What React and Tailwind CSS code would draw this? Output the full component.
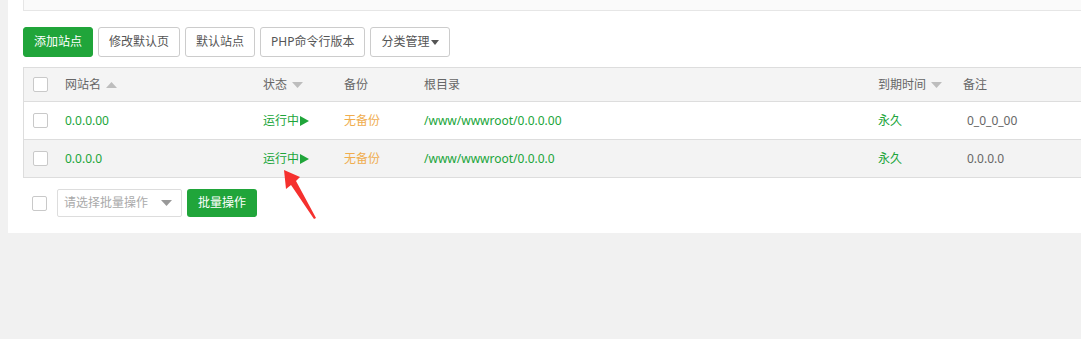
import React from 'react';

const FONT = "font-['Noto_Sans','Noto_Sans_CJK_SC',sans-serif]";

const sites = [
  { name: '0.0.0.00', path: '/www/wwwroot/0.0.0.00', note: '0_0_0_00' },
  { name: '0.0.0.0', path: '/www/wwwroot/0.0.0.0', note: '0.0.0.0', hover: true },
];

const Check = () => (
  <span className="block w-[15px] h-[15px] bg-white border border-[#c9c9c9] rounded-[2px]" />
);

const SortUp = () => (
  <svg width="11" height="6" viewBox="0 0 11 6" className="ml-[5px]">
    <path d="M0 6 L5.5 0 L11 6 Z" fill="#bdbdbd" />
  </svg>
);

const SortDown = () => (
  <svg width="11" height="6" viewBox="0 0 11 6" className="ml-[5px]">
    <path d="M0 0 L5.5 6 L11 0 Z" fill="#bdbdbd" />
  </svg>
);

const cols = 'grid grid-cols-[32px_198px_80px_80px_455px_85px_1fr]';

const Btn = ({ children, green }) => (
  <button
    className={
      green
        ? 'h-[30px] px-[10px] rounded-[3px] bg-[#20a53a] border border-[#20a53a] text-white text-[12px]'
        : 'h-[30px] px-[10px] rounded-[3px] bg-white border border-[#ccc] text-[#555] text-[12px] flex items-center'
    }
  >
    {children}
  </button>
);

export default function App() {
  return (
    <div className={`relative w-[1081px] h-[339px] overflow-hidden bg-[#f1f1f1] ${FONT}`}>
      <div className="ml-[8px] w-[1100px] bg-white px-[15px] pb-[16px]">
        {/* top box (cut off) */}
        <div className="h-[11px] bg-[#fafafa] border-l border-b border-[#e6e6e6]" />

        {/* toolbar */}
        <div className="mt-[16px] flex gap-[5px]">
          <Btn green>添加站点</Btn>
          <Btn>修改默认页</Btn>
          <Btn>默认站点</Btn>
          <Btn>PHP命令行版本</Btn>
          <Btn>
            分类管理
            <svg width="8" height="5" viewBox="0 0 8 5" className="ml-[2px] mt-[1px]">
              <path d="M0 0 L4 5 L8 0 Z" fill="#555" />
            </svg>
          </Btn>
        </div>

        {/* table */}
        <div className="mt-[10px] border-l border-t border-[#ddd] text-[12px]">
          <div className={`${cols} h-[34px] bg-[#f4f4f4] border-b border-[#ddd] text-[#666] items-center`}>
            <div className="pl-[9px]"><Check /></div>
            <div className="pl-[9px] flex items-center">网站名<SortUp /></div>
            <div className="pl-[9px] flex items-center">状态<SortDown /></div>
            <div className="pl-[10px]">备份</div>
            <div className="pl-[10px]">根目录</div>
            <div className="pl-[9px] flex items-center">到期时间<SortDown /></div>
            <div className="pl-[9px]">备注</div>
          </div>
          {sites.map((s) => (
            <div
              key={s.name}
              className={`${cols} h-[38px] border-b border-[#ddd] items-center ${s.hover ? 'bg-[#f3f3f3]' : 'bg-white'}`}
            >
              <div className="pl-[9px]"><Check /></div>
              <div className="pl-[9px] text-[#20a53a]">{s.name}</div>
              <div className="pl-[9px] text-[#20a53a] flex items-center">
                运行中
                <svg width="9" height="10" viewBox="0 0 9 10" className="ml-[1px]">
                  <path d="M0 0 L9 5 L0 10 Z" fill="#20a53a" />
                </svg>
              </div>
              <div className="pl-[10px] text-[#f0ad4e]">无备份</div>
              <div className="pl-[10px] text-[#20a53a]">{s.path}</div>
              <div className="pl-[9px] text-[#20a53a]">永久</div>
              <div className="pl-[13px] text-[#666]">{s.note}</div>
            </div>
          ))}
        </div>

        {/* batch row */}
        <div className="mt-[11px] flex items-center">
          <div className="ml-[9px]"><Check /></div>
          <div className="ml-[10px] w-[125px] h-[28px] border border-[#ddd] rounded-[2px] flex items-center justify-between pl-[6px] pr-[9px] text-[12px] text-[#aaa]">
            <span>请选择批量操作</span>
            <svg width="11" height="6" viewBox="0 0 11 6">
              <path d="M0 0 L5.5 6 L11 0 Z" fill="#999" />
            </svg>
          </div>
          <button className="ml-[5px] h-[28px] w-[70px] rounded-[3px] bg-[#20a53a] text-white text-[12px]">
            批量操作
          </button>
        </div>
      </div>

      {/* red annotation arrow */}
      <svg
        className="absolute left-[280px] top-[165px]"
        width="40"
        height="60"
        viewBox="0 0 40 60"
      >
        <polygon points="4,5 20,12 16,16 36,53 34,54 11,20 6,24" fill="#f5302e" />
      </svg>
    </div>
  );
}
